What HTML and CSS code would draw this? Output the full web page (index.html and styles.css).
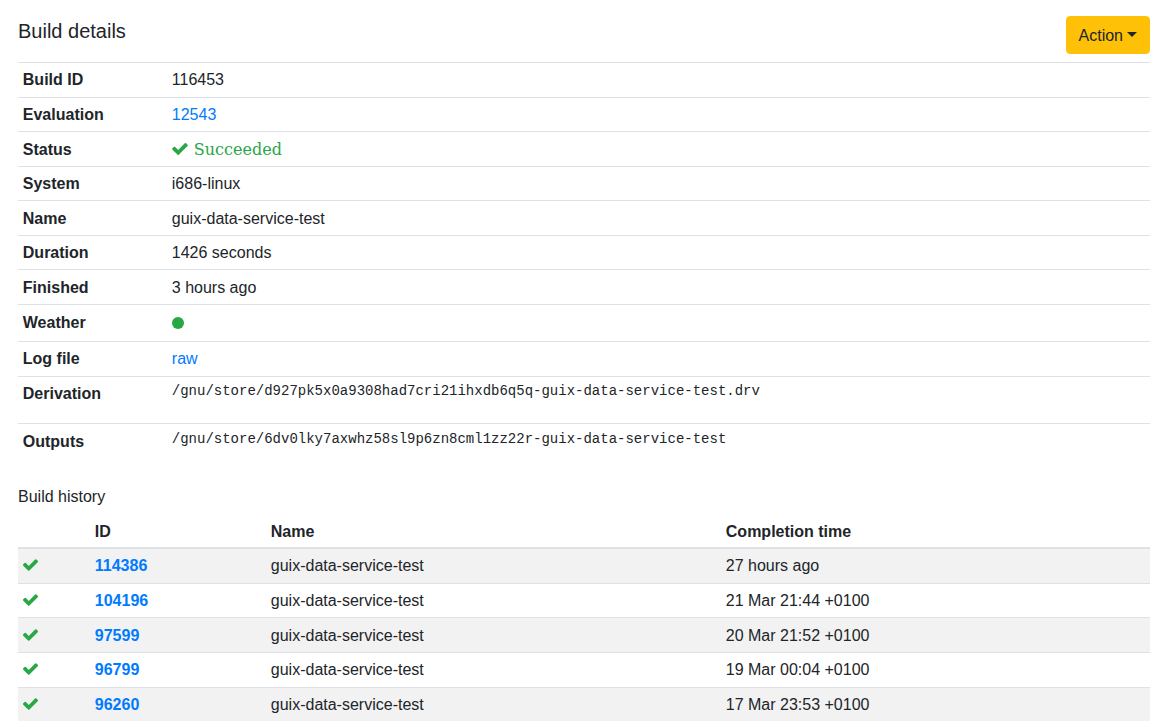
FILE: index.html
```html
<!DOCTYPE html>
<html lang="en">
<head>
<meta charset="utf-8">
<title>Build details</title>
<link rel="stylesheet" href="styles.css">
</head>
<body>
<div class="page">
  <div class="header">
    <h3 class="title">Build details</h3>
    <button class="btn-action" type="button">Action<span class="caret"></span></button>
  </div>

  <table class="details">
    <tbody>
      <tr><th>Build ID</th><td>116453</td></tr>
      <tr><th>Evaluation</th><td><a href="#">12543</a></td></tr>
      <tr><th>Status</th><td><span class="status"><svg class="check check-lg" viewBox="121 334 1550 1188" aria-hidden="true"><path d="M1671 566q0 40-28 68l-724 724-136 136q-28 28-68 28t-68-28l-136-136-362-362q-28-28-28-68t28-68l136-136q28-28 68-28t68 28l294 295 656-657q28-28 68-28t68 28l136 136q28 28 28 68z"/></svg><span class="status-text">Succeeded</span></span></td></tr>
      <tr><th>System</th><td>i686-linux</td></tr>
      <tr><th>Name</th><td>guix-data-service-test</td></tr>
      <tr><th>Duration</th><td>1426 seconds</td></tr>
      <tr><th>Finished</th><td>3 hours ago</td></tr>
      <tr class="weather-row"><th>Weather</th><td><span class="dot"></span></td></tr>
      <tr><th>Log file</th><td><a href="#">raw</a></td></tr>
      <tr><th>Derivation</th><td><pre>/gnu/store/d927pk5x0a9308had7cri21ihxdb6q5q-guix-data-service-test.drv</pre></td></tr>
      <tr><th>Outputs</th><td><pre>/gnu/store/6dv0lky7axwhz58sl9p6zn8cml1zz22r-guix-data-service-test</pre></td></tr>
    </tbody>
  </table>

  <h6 class="section-title">Build history</h6>
  <table class="history">
    <thead>
      <tr>
        <th class="c-icon"></th>
        <th class="c-id">ID</th>
        <th class="c-name">Name</th>
        <th class="c-time">Completion time</th>
      </tr>
    </thead>
    <tbody>
      <tr>
        <td><svg class="check" viewBox="121 334 1550 1188" aria-hidden="true"><path d="M1671 566q0 40-28 68l-724 724-136 136q-28 28-68 28t-68-28l-136-136-362-362q-28-28-28-68t28-68l136-136q28-28 68-28t68 28l294 295 656-657q28-28 68-28t68 28l136 136q28 28 28 68z"/></svg></td>
        <td><a class="id-link" href="#">114386</a></td>
        <td>guix-data-service-test</td>
        <td>27 hours ago</td>
      </tr>
      <tr>
        <td><svg class="check" viewBox="121 334 1550 1188" aria-hidden="true"><path d="M1671 566q0 40-28 68l-724 724-136 136q-28 28-68 28t-68-28l-136-136-362-362q-28-28-28-68t28-68l136-136q28-28 68-28t68 28l294 295 656-657q28-28 68-28t68 28l136 136q28 28 28 68z"/></svg></td>
        <td><a class="id-link" href="#">104196</a></td>
        <td>guix-data-service-test</td>
        <td>21 Mar 21:44 +0100</td>
      </tr>
      <tr>
        <td><svg class="check" viewBox="121 334 1550 1188" aria-hidden="true"><path d="M1671 566q0 40-28 68l-724 724-136 136q-28 28-68 28t-68-28l-136-136-362-362q-28-28-28-68t28-68l136-136q28-28 68-28t68 28l294 295 656-657q28-28 68-28t68 28l136 136q28 28 28 68z"/></svg></td>
        <td><a class="id-link" href="#">97599</a></td>
        <td>guix-data-service-test</td>
        <td>20 Mar 21:52 +0100</td>
      </tr>
      <tr>
        <td><svg class="check" viewBox="121 334 1550 1188" aria-hidden="true"><path d="M1671 566q0 40-28 68l-724 724-136 136q-28 28-68 28t-68-28l-136-136-362-362q-28-28-28-68t28-68l136-136q28-28 68-28t68 28l294 295 656-657q28-28 68-28t68 28l136 136q28 28 28 68z"/></svg></td>
        <td><a class="id-link" href="#">96799</a></td>
        <td>guix-data-service-test</td>
        <td>19 Mar 00:04 +0100</td>
      </tr>
      <tr>
        <td><svg class="check" viewBox="121 334 1550 1188" aria-hidden="true"><path d="M1671 566q0 40-28 68l-724 724-136 136q-28 28-68 28t-68-28l-136-136-362-362q-28-28-28-68t28-68l136-136q28-28 68-28t68 28l294 295 656-657q28-28 68-28t68 28l136 136q28 28 28 68z"/></svg></td>
        <td><a class="id-link" href="#">96260</a></td>
        <td>guix-data-service-test</td>
        <td>17 Mar 23:53 +0100</td>
      </tr>
    </tbody>
  </table>
</div>
</body>
</html>
```

FILE: styles.css
```css
* { box-sizing: border-box; }

html, body {
  margin: 0;
  padding: 0;
  background: #fff;
}

body {
  font-family: "Liberation Sans", Arial, sans-serif;
  font-size: 16px;
  line-height: 1.5;
  color: #212529;
}

a {
  color: #007bff;
  text-decoration: none;
}

.page {
  padding: 16px 21px 0 18px;
}

.header {
  display: flex;
  justify-content: space-between;
  align-items: flex-start;
  margin-bottom: 8px;
}

.title {
  margin: 3px 0 0 0;
  font-size: 20px;
  font-weight: 400;
  line-height: 1.2;
}

.btn-action {
  font-family: inherit;
  font-size: 16px;
  line-height: 1.5;
  color: #212529;
  background: #ffc107;
  border: 1px solid #ffc107;
  border-radius: 4px;
  padding: 7px 12px 5px 12px;
  cursor: pointer;
}

.caret {
  display: inline-block;
  margin-left: 4px;
  vertical-align: 4px;
  border-top: 5px solid #212529;
  border-right: 5px solid transparent;
  border-left: 5px solid transparent;
  border-bottom: 0;
  width: 0;
  height: 0;
}

table {
  width: 100%;
  border-collapse: collapse;
}

.details {
  margin-bottom: 16px;
}

.details th,
.details td {
  padding: 5.4px 4.8px 4.2px 4.8px;
  border-top: 1px solid #dee2e6;
  vertical-align: top;
  text-align: left;
}

.details th {
  width: 149px;
  font-weight: 700;
}

.weather-row th,
.weather-row td {
  padding-top: 6.2px;
  padding-bottom: 5.8px;
}

.dot {
  display: inline-block;
  width: 12px;
  height: 12px;
  border-radius: 50%;
  background: #28a745;
  vertical-align: -1px;
}

pre {
  margin: 0 0 16px 0;
  font-family: "Liberation Mono", "Courier New", monospace;
  font-size: 14px;
  line-height: 1.5;
  color: #212529;
}

.details pre {
  position: relative;
  top: -1px;
}

.status {
  color: #28a745;
}

.check {
  display: inline-block;
  width: 15px;
  height: 12px;
  fill: #28a745;
}

.check-lg {
  width: 16px;
  height: 12px;
  margin-right: 6px;
  vertical-align: 0;
}

.status-text {
  font-family: "DejaVu Serif", serif;
  font-size: 16px;
}

.section-title {
  margin: 0 0 6px 0;
  font-size: 16px;
  font-weight: 400;
  line-height: 1.2;
}

.history th,
.history td {
  padding: 4.8px;
  text-align: left;
  vertical-align: top;
}

.history thead th {
  padding-top: 6.8px;
  padding-bottom: 3.3px;
  font-weight: 700;
  border-top: 1px solid transparent;
  border-bottom: 2px solid #dee2e6;
}

.history tbody td {
  border-top: 1px solid #dee2e6;
  padding-top: 5.3px;
  padding-bottom: 4.4px;
}

.history tbody tr:nth-child(odd) {
  background: #f2f2f2;
}

.history .c-icon { width: 72px; }
.history .c-id { width: 176px; }
.history .c-name { width: 455px; }

.history tbody td .check {
  margin-top: 5px;
  vertical-align: top;
}

.id-link {
  font-weight: 700;
}
```
